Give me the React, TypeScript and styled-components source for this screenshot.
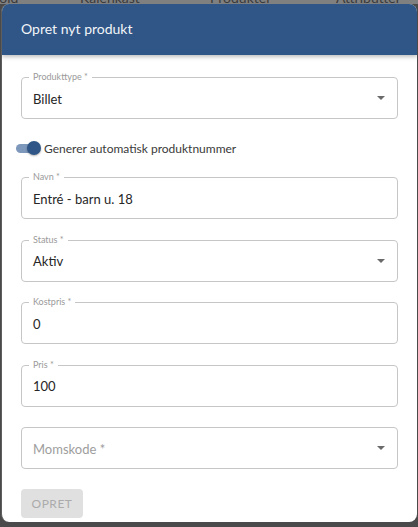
import React from 'react';
import styled, {createGlobalStyle} from "styled-components";

const GlobalStyle = createGlobalStyle`
  *, *::before, *::after {
    box-sizing: border-box;
  }
  html, body {
    margin: 0;
    padding: 0;
    background: #4a4a4a;
  }
  body {
    font-family: Lato, "Open Sans", sans-serif;
  }
`;

type FieldProps = {
    label: string;
    value?: string;
    select?: boolean;
};

const tabs = [
    {name: 'Indhold', left: -28},
    {name: 'Kalenkast', left: 80},
    {name: 'Produkter', left: 210},
    {name: 'Attributter', left: 336},
];

const Field = ({label, value, select}: FieldProps) => {
    return (
        <FieldBox>
            {value !== undefined && <FieldLabel>{label}</FieldLabel>}
            {value !== undefined ? <FieldValue>{value}</FieldValue> : <Placeholder>{label}</Placeholder>}
            {select && <Arrow />}
        </FieldBox>
    );
};

const App = () => {
    return (
        <Page>
            <GlobalStyle />
            <TabStrip>
                {tabs.map((tab) => (
                    <Tab key={tab.name} style={{left: tab.left}}>{tab.name}</Tab>
                ))}
            </TabStrip>
            <Dialog>
                <Header>
                    <Title>Opret nyt produkt</Title>
                </Header>
                <Content>
                    <Field label="Produkttype *" value="Billet" select />
                    <ToggleRow>
                        <Switch>
                            <Track />
                            <Thumb />
                        </Switch>
                        <ToggleLabel>Generer automatisk produktnummer</ToggleLabel>
                    </ToggleRow>
                    <FieldList>
                        <Field label="Navn *" value="Entré - barn u. 18" />
                        <Field label="Status *" value="Aktiv" select />
                        <Field label="Kostpris *" value="0" />
                        <Field label="Pris *" value="100" />
                        <Field label="Momskode *" select />
                    </FieldList>
                    <SubmitButton disabled>Opret</SubmitButton>
                </Content>
            </Dialog>
        </Page>
    );
};

const Page = styled.div`
  width: 418px;
  height: 527px;
  display: flex;
  flex-direction: column;
  background: #4a4a4a;
  overflow: hidden;
`;

const TabStrip = styled.div`
  position: relative;
  height: 4px;
  flex-shrink: 0;
  background: #808080;
  overflow: hidden;
`;

const Tab = styled.span`
  position: absolute;
  bottom: -1px;
  font-size: 14px;
  line-height: 14px;
  color: #3a3a3a;
  white-space: nowrap;
`;

const Dialog = styled.div`
  margin: 0 1px;
  height: 518px;
  display: flex;
  flex-direction: column;
  background: #fff;
  border-radius: 8px;
  overflow: hidden;
  border-left: 1px solid #5e5e5e;
`;

const Header = styled.div`
  height: 51px;
  flex-shrink: 0;
  display: flex;
  align-items: center;
  padding: 0 19px;
  background: #2f5686;
  box-shadow: 0 2px 4px rgba(0, 0, 0, 0.25);
`;

const Title = styled.h2`
  margin: 0 0 2px;
  font-size: 14px;
  font-weight: 400;
  color: #f2f4f8;
`;

const Content = styled.div`
  display: flex;
  flex-direction: column;
  padding: 22px 19px 0 19px;
`;

const FieldList = styled.div`
  display: flex;
  flex-direction: column;
  gap: 20.5px;
`;

const FieldBox = styled.div`
  position: relative;
  height: 42px;
  display: flex;
  align-items: center;
  padding: 0 11px;
  border: 1px solid #c6c6c6;
  border-radius: 4px;
`;

const FieldLabel = styled.span`
  position: absolute;
  top: -6px;
  left: 7px;
  padding: 0 4px;
  background: #fff;
  font-size: 9px;
  line-height: 10px;
  color: #9a9a9a;
`;

const FieldValue = styled.span`
  font-size: 13px;
  color: #262626;
  margin-top: 1px;
`;

const Placeholder = styled(FieldValue)`
  color: #9d9d9d;
`;

const Arrow = styled.span`
  margin-left: auto;
  margin-right: 1px;
  width: 0;
  height: 0;
  border-left: 4.5px solid transparent;
  border-right: 4.5px solid transparent;
  border-top: 4.5px solid #6a6a6a;
`;

const ToggleRow = styled.div`
  display: flex;
  align-items: center;
  height: 20px;
  margin: 19px 0 19px -5px;
`;

const Switch = styled.div`
  position: relative;
  width: 25px;
  height: 16px;
  display: flex;
  align-items: center;
`;

const Track = styled.div`
  width: 20px;
  height: 9px;
  border-radius: 5px;
  background: #7d98bb;
`;

const Thumb = styled.div`
  position: absolute;
  right: 0;
  top: 1px;
  width: 14px;
  height: 14px;
  border-radius: 50%;
  background: #2f5686;
  box-shadow: 0 1px 2px rgba(0, 0, 0, 0.3);
`;

const ToggleLabel = styled.span`
  margin-left: 3px;
  font-size: 12px;
  color: #3a3a3a;
`;

const SubmitButton = styled.button`
  align-self: flex-start;
  margin-top: 20px;
  width: 62px;
  height: 29px;
  border: none;
  border-radius: 4px;
  background: #e0e0e0;
  color: #ababab;
  font-family: inherit;
  font-size: 12px;
  letter-spacing: 0.5px;
  text-transform: uppercase;
`;

export default App;
